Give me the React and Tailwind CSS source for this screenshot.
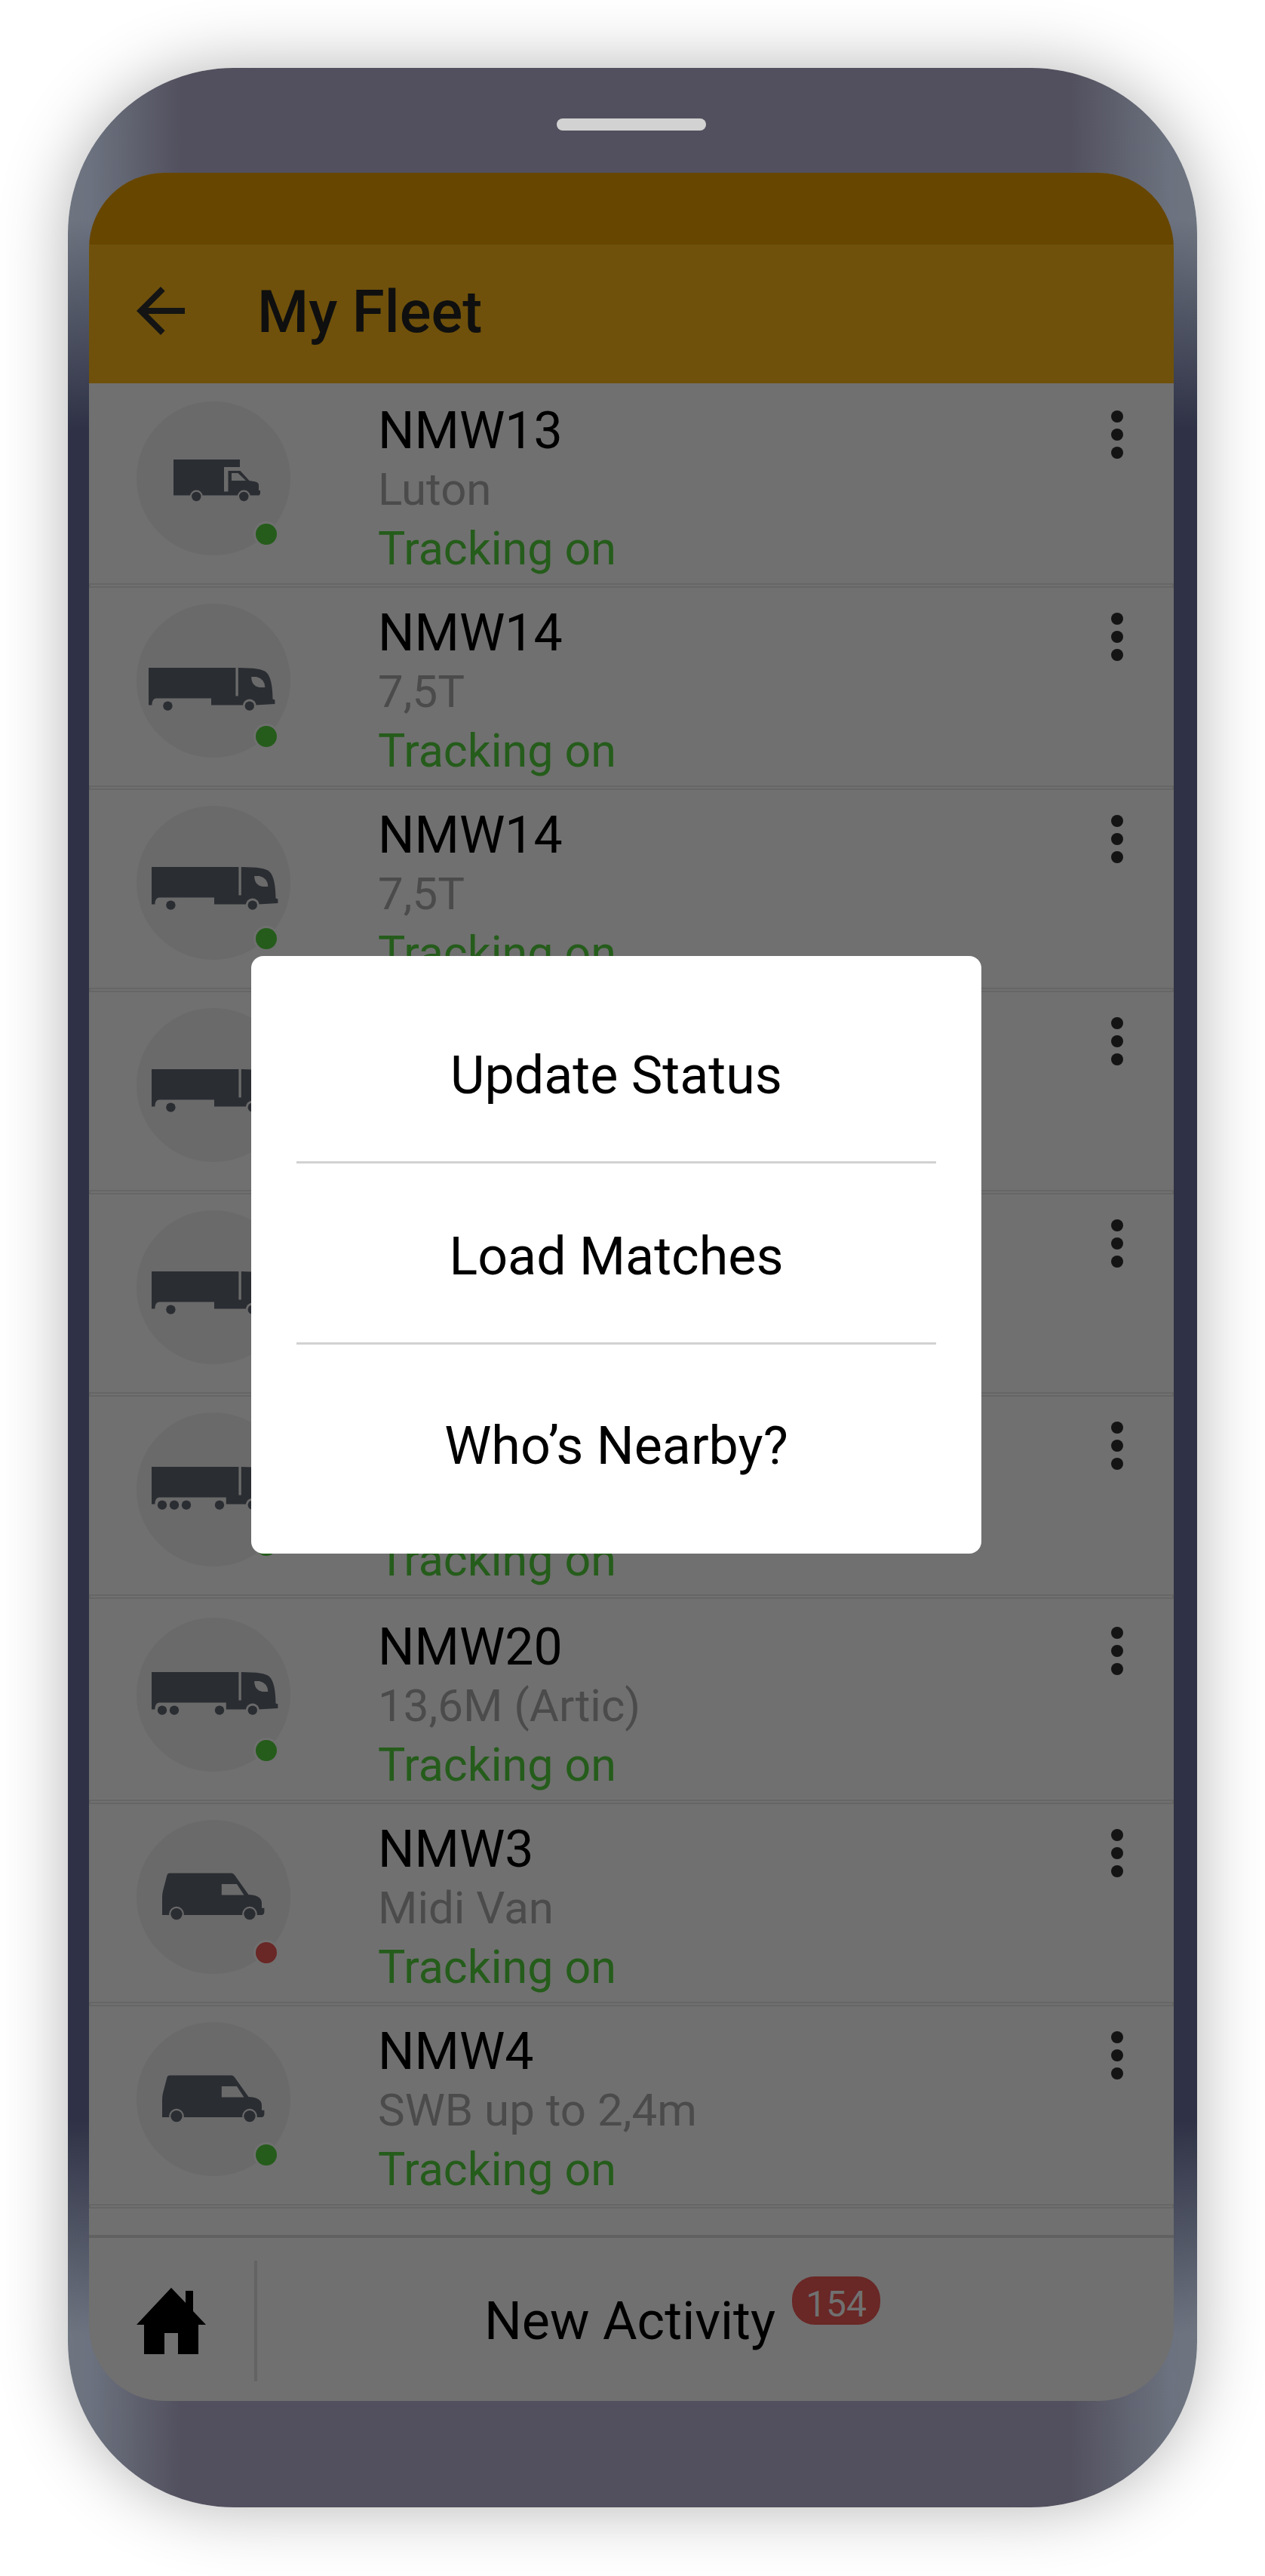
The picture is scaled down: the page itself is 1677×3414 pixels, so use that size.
import React from "react";

const INK = "#2a2d32";
const DISC = "#6a6a6a";

function Wheel({ x, y, r = 6, halo = 0 }) {
  return (
    <>
      {halo > 0 && <circle cx={x} cy={y} r={halo} fill={DISC} />}
      <circle cx={x} cy={y} r={r} fill={INK} />
    </>
  );
}

function LutonIcon() {
  return (
    <svg viewBox="0 0 204 204" className="size-full" aria-hidden="true">
      <path
        fill={INK}
        d="M49 77H137V87H116V119.5H121.5V92H137.5L149.5 105L158 106.4Q162 107.5 162 111V118H164V122L162.6 124.5H49Z"
      />
      <path fill={DISC} d="M126 105V95H134.5L145 105Z" />
      <Wheel x={79.3} y={126} r={6.2} halo={8.4} />
      <Wheel x={142.3} y={126} r={6.2} halo={8.4} />
    </svg>
  );
}

function TruckIcon({ dx = 0, dy = 0, step = 103, wheels }) {
  return (
    <svg viewBox="0 0 204 204" className="size-full" aria-hidden="true">
      <g transform={`translate(${dx} ${dy})`}>
        <path
          fill={INK}
          d={`M20 81H135.4V118.5H138.8V81Q170 81 176 87C182 92 184.5 107 184.5 122.6L187.4 123.6V129L161 130.6H${step}V121.4H30Q24.4 122 24.4 130.6H20Z`}
        />
        <path
          fill={DISC}
          d="M156.2 93H163Q174.3 96 174.3 107H167Q156.2 105 156.2 93Z"
        />
        {wheels.map((x) => (
          <Wheel key={x} x={x} y={131.6} r={6.2} />
        ))}
        <Wheel x={153.8} y={131.6} r={6.2} halo={9} />
      </g>
    </svg>
  );
}

function VanIcon() {
  return (
    <svg viewBox="0 0 204 204" className="size-full" aria-hidden="true">
      <path
        fill={INK}
        d="M34 126V103Q34 98 35 94L40.5 73Q41 70.5 43.5 70.5H126Q128.5 70.5 130 73L148.5 99C158 99.5 166 102 166 110V116.8H169.4V122Q169 126 165.5 126Z"
      />
      <path fill={DISC} d="M112.8 85H133L142.4 99.4H112.8Z" />
      <Wheel x={53} y={124.6} r={7.7} halo={9.8} />
      <Wheel x={150} y={124.6} r={7.7} halo={9.8} />
    </svg>
  );
}

const smallTruck = <TruckIcon wheels={[45.4]} />;

const vehicles = [
  { name: "NMW13", type: "Luton", status: "Tracking on", icon: <LutonIcon /> },
  {
    name: "NMW14",
    type: "7,5T",
    status: "Tracking on",
    icon: <TruckIcon dx={-4} dy={4} wheels={[45.4]} />,
  },
  { name: "NMW14", type: "7,5T", status: "Tracking on", icon: smallTruck },
  { icon: smallTruck },
  { icon: smallTruck },
  {
    status: "Tracking on",
    icon: <TruckIcon dy={-9} step={118.8} wheels={[34, 50, 66, 110]} />,
  },
  {
    name: "NMW20",
    type: "13,6M (Artic)",
    status: "Tracking on",
    icon: <TruckIcon dy={-9} step={118.8} wheels={[34, 50, 110]} />,
    spaced: true,
  },
  { name: "NMW3", type: "Midi Van", status: "Tracking on", icon: <VanIcon />, offline: true },
  { name: "NMW4", type: "SWB up to 2,4m", status: "Tracking on", icon: <VanIcon /> },
];

function VehicleRow({ name, type, status, icon, offline, spaced }) {
  return (
    <li className={spaced ? "mt-1" : ""}>
      <div className="flex items-start pt-[21px] pb-[7px] pl-[63px] pr-[67px]">
        <div className="relative size-[204px] shrink-0 rounded-full bg-[#6a6a6a]">
          {icon}
          <span
            className={
              "absolute left-[158px] top-[162px] size-7 rounded-full ring-3 ring-[#707070] " +
              (offline ? "bg-[#692725]" : "bg-[#255c1b]")
            }
          />
        </div>
        <div className="ml-[116px] flex min-h-[234px] flex-1 flex-col justify-end leading-[78px]">
          {name && <h2 className="text-[68px] text-black">{name}</h2>}
          {type && <p className="text-[60px] text-[#4b4b4b]">{type}</p>}
          {status && <p className="text-[61px] text-[#255c1b]">{status}</p>}
        </div>
        <button type="button" aria-label={`Options for ${name || "vehicle"}`} className="mt-3 flex flex-col gap-2">
          <span className="size-4 rounded-full bg-[#141414]" />
          <span className="size-4 rounded-full bg-[#141414]" />
          <span className="size-4 rounded-full bg-[#141414]" />
        </button>
      </div>
      <div className="h-[6px] border-2 border-[#666666]" />
    </li>
  );
}

export default function App() {
  return (
    <div className="bg-white px-[90px] pt-[90px] pb-[91px] font-['Roboto',sans-serif]">
      <div className="rounded-[220px] bg-[linear-gradient(to_bottom,transparent_200px,#2f3246_478px,#2f3246_calc(100%_-_512px),transparent_calc(100%_-_230px)),linear-gradient(to_right,#6e7580_0,#6c727f_30px,#52505e_150px,#52505e_calc(100%_-_168px),#6c727f_calc(100%_-_36px),#6e7580_100%)] pl-7 pr-[31px] pb-[141px] shadow-[0_0_90px_rgba(0,0,0,0.3)]">
        <div className="flex h-[139px] justify-center pt-[67px]">
          <span className="h-4 w-[198px] rounded-full bg-[#d2d2d2]" />
        </div>

        <div className="relative overflow-hidden rounded-[100px] bg-[#707070]">
          <div className="h-[95px] bg-[#674600]" />
          <header className="flex h-[184px] items-center bg-[#6f510b] pl-[63px] pb-2 text-[#0f0f0f]">
            <button type="button" aria-label="Back">
              <svg viewBox="4 4 16 16" className="size-16" fill="#141414" aria-hidden="true">
                <path d="M20 11H7.83l5.59-5.59L12 4l-8 8 8 8 1.41-1.41L7.83 13H20v-2z" />
              </svg>
            </button>
            <h1 className="ml-24 pt-1 text-[78px] leading-[92px] font-medium">My Fleet</h1>
          </header>

          <ul className="pt-[3px] pb-[35px]">
            {vehicles.map((v, i) => (
              <VehicleRow key={i} {...v} />
            ))}
          </ul>

          <footer className="flex h-[220px] items-center border-t-4 border-[#616161] pt-1 pl-[63px]">
            <a href="#home" aria-label="Home">
              <svg viewBox="0 0 92 88" className="h-[88px] w-[92px]" aria-hidden="true">
                <path d="M46 0L65 20V4H75V31L92 49H82V88H55V60H37V88H10V49H0Z" />
              </svg>
            </a>
            <span className="ml-16 h-40 w-1 bg-[#636363]" />
            <a href="#activity" className="flex flex-1 items-center justify-center gap-[22px] pr-[88px]">
              <span className="text-[70px] leading-[80px] text-black">New Activity</span>
              <span className="mb-[54px] rounded-[30px] bg-[#692725] px-[18px] pt-2.5 text-[48px] leading-[54px] text-[#707070]">
                154
              </span>
            </a>
          </footer>

          <div className="absolute inset-0 flex items-center justify-center pr-10 pb-[85px]">
            <div
              role="dialog"
              aria-label="Vehicle actions"
              className="flex w-[968px] max-w-full flex-col divide-y-3 divide-[#d2d2d2] rounded-2xl bg-white px-[60px] text-[70px] leading-[80px] text-black"
            >
              <button type="button" className="pt-[118px] pb-[74px]">
                Update Status
              </button>
              <button type="button" className="pt-[83px] pb-[74px]">
                Load Matches
              </button>
              <button type="button" className="pt-[94px] pb-[103px]">
                Who’s Nearby?
              </button>
            </div>
          </div>
        </div>
      </div>
    </div>
  );
}
